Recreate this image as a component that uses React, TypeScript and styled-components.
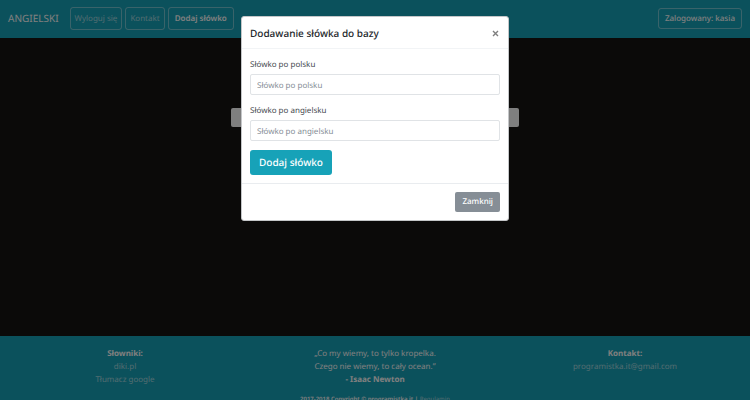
import React from "react";
import styled, { createGlobalStyle, css } from "styled-components";

const GlobalStyle = createGlobalStyle`
  *, *::before, *::after { box-sizing: border-box; }
  body {
    margin: 0;
    background: #161412;
    color: #fff;
    font-family: "Noto Sans", "Open Sans", sans-serif;
    font-size: 8px;
    line-height: 13px;
    text-rendering: geometricPrecision;
    overflow: hidden;
  }
  button, input { font: inherit; text-rendering: inherit; }
`;

const Page = styled.div`
  display: flex;
  flex-direction: column;
  min-height: 100vh;
`;

const Navbar = styled.nav`
  display: flex;
  align-items: center;
  gap: 3px;
  padding: 7px 8px 8px;
  background: #17a2b8;
`;

const Brand = styled.a`
  margin-right: 8px;
  color: #fff;
  font-size: 10px;
  text-decoration: none;
`;

const outline = css`
  padding: 4px 4px;
  border: 1px solid rgba(255, 255, 255, 0.4);
  border-radius: 3px;
  line-height: 13px;
  white-space: nowrap;
`;

const NavLink = styled.a`
  ${outline}
  color: rgba(255, 255, 255, 0.6);
  text-decoration: none;
`;

const NavButton = styled.button<{ $push?: boolean }>`
  ${outline}
  padding: ${(p) => (p.$push ? "3px 6px" : "4px 6px")};
  margin-left: ${(p) => (p.$push ? "auto" : "0")};
  background: transparent;
  color: #fff;
  font-weight: ${(p) => (p.$push ? 500 : 600)};
`;

const Main = styled.main`
  flex: none;
  min-height: 298px;
  padding-top: 70px;
`;

const Panel = styled.div`
  width: 38.4%;
  height: 19px;
  margin: 0 auto;
  border-radius: 2px;
  background: #fff;
`;

const Footer = styled.footer`
  padding-top: 11px;
  background: #17a2b8;
  text-align: center;
`;

const Columns = styled.div`
  display: grid;
  grid-template-columns: repeat(3, 1fr);
`;

const Column = styled.div`
  display: flex;
  flex-direction: column;
  align-items: center;
`;

const FooterLink = styled.a`
  color: rgba(255, 255, 255, 0.6);
  text-decoration: none;
`;

const Copyright = styled.p`
  margin: 7px 0 4px;
  font-size: 6px;
  line-height: 12px;
  font-weight: 600;

  ${FooterLink} { font-weight: 400; }
`;

const Backdrop = styled.div`
  position: fixed;
  inset: 0;
  padding: 16px;
  background: rgba(0, 0, 0, 0.5);
`;

const Dialog = styled.section`
  width: 100%;
  max-width: 268px;
  margin: 0 auto;
  border: 1px solid #c4c6c8;
  border-radius: 3px;
  background: #fff;
  color: #212529;
`;

const DialogHeader = styled.header`
  display: flex;
  align-items: center;
  justify-content: space-between;
  padding: 8px 8px 7px;
  border-bottom: 1px solid #f2f4f6;
`;

const Title = styled.h5`
  margin: 0;
  font-size: 10px;
  line-height: 16px;
  font-weight: 500;
`;

const Close = styled.button`
  display: flex;
  padding: 1px;
  border: 0;
  background: transparent;
  color: #7f7f7f;
`;

const Form = styled.form`
  display: flex;
  flex-direction: column;
  align-items: flex-start;
  gap: 9px;
  padding: 9px 8px 8px;
`;

const Field = styled.div`
  display: flex;
  flex-direction: column;
  gap: 3px;
  width: 100%;
`;

const Label = styled.label`
  color: #454a4f;
`;

const Input = styled.input`
  width: 100%;
  height: 21px;
  padding: 4px 6px 3px;
  border: 1px solid #e0e3e6;
  border-radius: 2px;
  background: #fff;
  color: #495057;

  &::placeholder { color: #868e96; opacity: 1; }
`;

const Submit = styled.button`
  padding: 5px 9px;
  border: 0;
  border-radius: 3px;
  background: #17a2b8;
  color: #fff;
  font-size: 10px;
  line-height: 15px;
  font-weight: 500;
`;

const DialogFooter = styled.footer`
  display: flex;
  justify-content: flex-end;
  padding: 8px;
  border-top: 1px solid #e9ecef;
`;

const Dismiss = styled.button`
  padding: 3px 7px;
  border: 0;
  border-radius: 2px;
  background: #868e96;
  color: #fff;
  line-height: 14px;
  font-weight: 500;
`;

export default function App() {
  return (
    <>
      <GlobalStyle />
      <Page>
        <Navbar>
          <Brand href="#">ANGIELSKI</Brand>
          <NavLink href="#">Wyloguj się</NavLink>
          <NavLink href="#">Kontakt</NavLink>
          <NavButton type="button">Dodaj słówko</NavButton>
          <NavButton type="button" $push>Zalogowany: kasia</NavButton>
        </Navbar>
        <Main>
          <Panel />
        </Main>
        <Footer>
          <Columns>
            <Column>
              <strong>Słowniki:</strong>
              <FooterLink href="#">diki.pl</FooterLink>
              <FooterLink href="#">Tłumacz google</FooterLink>
            </Column>
            <Column>
              <span>„Co my wiemy, to tylko kropelka.</span>
              <span>Czego nie wiemy, to cały ocean.”</span>
              <strong>- Isaac Newton</strong>
            </Column>
            <Column>
              <strong>Kontakt:</strong>
              <FooterLink href="mailto:programistka.it@gmail.com">programistka.it@gmail.com</FooterLink>
            </Column>
          </Columns>
          <Copyright>
            2017-2018 Copyright © programistka.it | <FooterLink href="#">Regulamin</FooterLink>
          </Copyright>
        </Footer>
      </Page>
      <Backdrop>
        <Dialog role="dialog" aria-modal="true" aria-labelledby="dialog-title">
          <DialogHeader>
            <Title id="dialog-title">Dodawanie słówka do bazy</Title>
            <Close type="button">
              <svg width="7" height="7" viewBox="0 0 7 7" fill="none" stroke="currentColor" strokeWidth="1.4" aria-hidden="true">
                <path d="M1 1l5 5M6 1L1 6" />
              </svg>
            </Close>
          </DialogHeader>
          <Form onSubmit={(e) => e.preventDefault()}>
            <Field>
              <Label htmlFor="polish">Słówko po polsku</Label>
              <Input id="polish" type="text" placeholder="Słówko po polsku" />
            </Field>
            <Field>
              <Label htmlFor="english">Słówko po angielsku</Label>
              <Input id="english" type="text" placeholder="Słówko po angielsku" />
            </Field>
            <Submit type="submit">Dodaj słówko</Submit>
          </Form>
          <DialogFooter>
            <Dismiss type="button">Zamknij</Dismiss>
          </DialogFooter>
        </Dialog>
      </Backdrop>
    </>
  );
}
